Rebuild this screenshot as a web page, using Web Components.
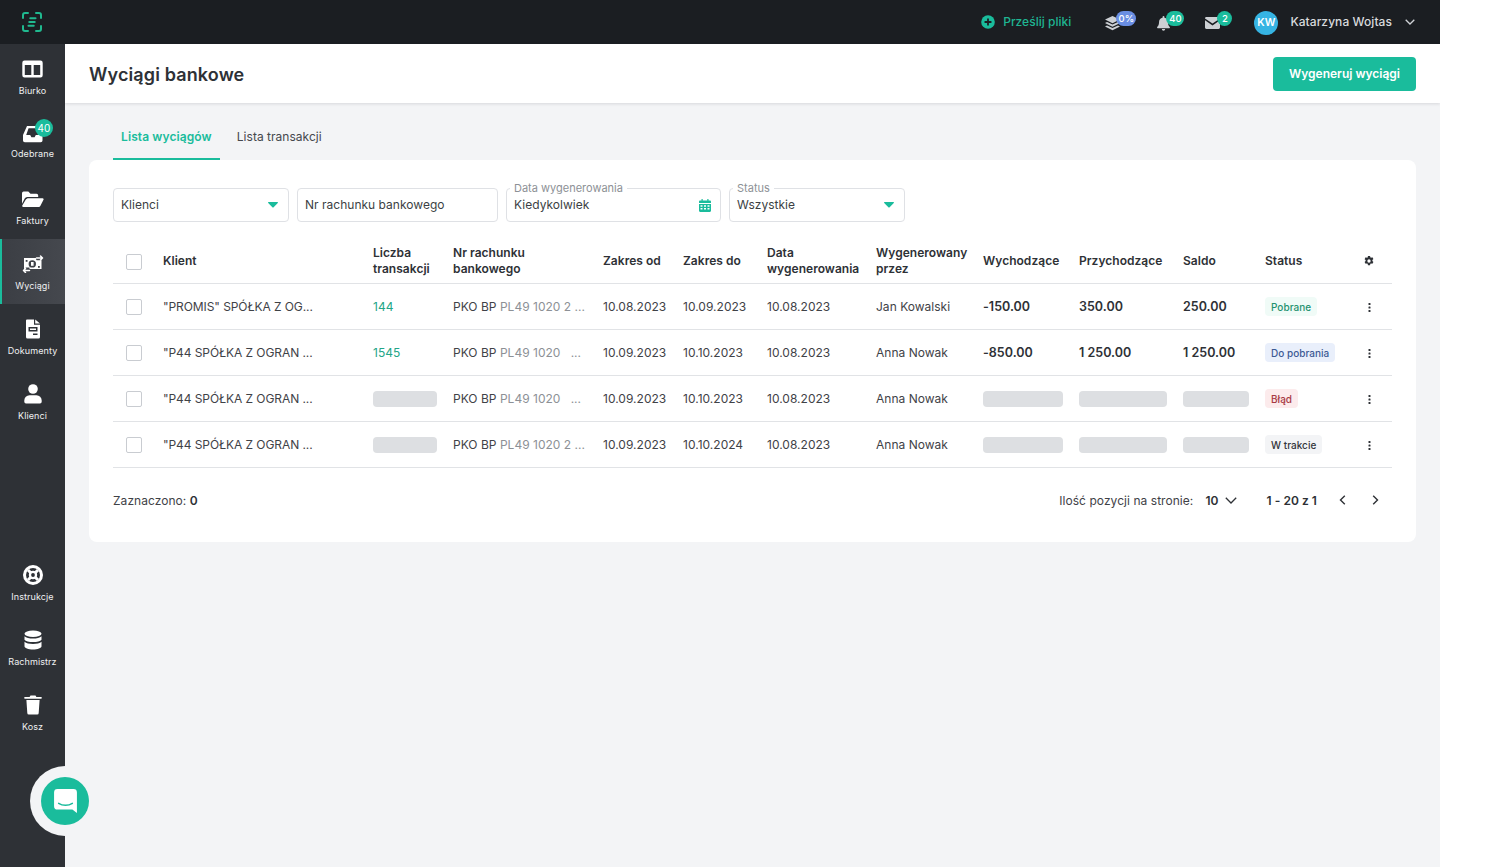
<!DOCTYPE html>
<html lang="pl"><head><meta charset="utf-8"><title>Wyciągi bankowe</title>
<style>
html,body{margin:0;padding:0;background:#fff;height:100%;overflow:hidden}
body{font-family:Inter,"Liberation Sans",sans-serif;color:#2e3136}
</style></head><body>
<app-shell>
  <app-topbar slot="top"></app-topbar>
  <app-sidebar slot="side">
    <nav-item label="Biurko" icon="desk"></nav-item>
    <nav-item label="Odebrane" icon="inbox" badge="40" tight></nav-item>
    <nav-item label="Faktury" icon="folder"></nav-item>
    <nav-item label="Wyciągi" icon="money" active></nav-item>
    <nav-item label="Dokumenty" icon="doc"></nav-item>
    <nav-item label="Klienci" icon="user"></nav-item>
    <nav-item slot="bottom" label="Instrukcje" icon="help"></nav-item>
    <nav-item slot="bottom" label="Rachmistrz" icon="db"></nav-item>
    <nav-item slot="bottom" label="Kosz" icon="trash"></nav-item>
  </app-sidebar>
  <page-header title="Wyciągi bankowe" action="Wygeneruj wyciągi"></page-header>
  <tab-bar><tab-item active>Lista wyciągów</tab-item><tab-item>Lista transakcji</tab-item></tab-bar>
  <content-card>
    <filter-bar>
      <filter-field w="176" value="Klienci" kind="select"></filter-field>
      <filter-field w="201" value="Nr rachunku bankowego"></filter-field>
      <filter-field w="215" value="Kiedykolwiek" legend="Data wygenerowania" kind="date"></filter-field>
      <filter-field w="176" value="Wszystkie" legend="Status" kind="select"></filter-field>
    </filter-bar>
    <table-head></table-head>
    <statement-row client='"PROMIS" SPÓŁKA Z OG...' count="144" acct="PL49 1020 2 ..." from="10.08.2023" to="10.09.2023" gen="10.08.2023" by="Jan Kowalski" out="-150.00" in="350.00" bal="250.00" status="Pobrane" kind="ok"></statement-row>
    <statement-row client='"P44 SPÓŁKA Z OGRAN ...' count="1545" acct="PL49 1020   ..." from="10.09.2023" to="10.10.2023" gen="10.08.2023" by="Anna Nowak" out="-850.00" in="1 250.00" bal="1 250.00" status="Do pobrania" kind="info"></statement-row>
    <statement-row client='"P44 SPÓŁKA Z OGRAN ...' acct="PL49 1020   ..." from="10.09.2023" to="10.10.2023" gen="10.08.2023" by="Anna Nowak" status="Błąd" kind="err"></statement-row>
    <statement-row client='"P44 SPÓŁKA Z OGRAN ...' acct="PL49 1020 2 ..." from="10.09.2023" to="10.10.2024" gen="10.08.2023" by="Anna Nowak" status="W trakcie" kind="idle"></statement-row>
    <table-footer></table-footer>
  </content-card>
  <chat-launcher slot="over"></chat-launcher>
</app-shell>
<script>
const def=(name,css,html,init)=>customElements.define(name,class extends HTMLElement{
  constructor(){super();this.attachShadow({mode:'open'})}
  connectedCallback(){
    const a=n=>this.getAttribute(n);
    this.shadowRoot.innerHTML=`<style>${css}</style>${typeof html==='function'?html(a,this):html}`;
    if(init)init(this,a);
  }
});
const G='#1abc9c';
const icons={
desk:`<svg width="21" height="18" viewBox="0 0 21 18"><path fill="#fff" fill-rule="evenodd" d="M2.500 .5h16A2.200 2.200 0 0 1 20.700 2.700v12.600a2.200 2.200 0 0 1-2.200 2.200h-16A2.200 2.200 0 0 1 .3 15.300V2.700A2.200 2.200 0 0 1 2.500 .5ZM2.800 5v10h6.500V5ZM11.700 5v10h6.500V5Z"/></svg>`,
inbox:`<svg width="22" height="18" viewBox="0 0 22 18"><path fill="#fff" d="M5 1h12.500l3 9v5.500a1.800 1.800 0 0 1-1.800 1.800H2.800A1.800 1.800 0 0 1 1 15.500V10Zm1.600 2.300L4.200 10h4l1.200 2.300h3.200L13.800 10h4l-2.400-6.700Z"/></svg>`,
folder:`<svg width="23" height="19" viewBox="0 0 23 19"><path fill="#fff" d="M1 3.200A1.700 1.700 0 0 1 2.700 1.500h4.600l2.200 2.200h6A1.700 1.700 0 0 1 17.200 5.400V7H6.200a2.800 2.800 0 0 0-2.500 1.500L1 13.700Z"/><path fill="#fff" d="M6.200 8.300h15.400c.8 0 1.300.8.900 1.500l-3.200 6.300a1.700 1.700 0 0 1-1.500.9H2.200c-.8 0-1.300-.8-.9-1.500l3.400-5.800a1.700 1.700 0 0 1 1.500-.9Z"/></svg>`,
money:`<svg width="22" height="18" viewBox="0 0 22 18"><path fill="#fff" fill-rule="evenodd" d="M2 3h12.500v2.300h5V14H7.500v-1.600H3.700v1.600H2Zm8.300 2.200a3.700 3.700 0 1 0 0 7.400 3.700 3.700 0 0 0 0-7.400Z"/><rect x="9" y="7" width="2.600" height="3.800" fill="#fff"/><rect x="3.700" y="5" width="1.800" height="1.800" fill="#3f4248"/><rect x="16" y="11" width="1.800" height="1.800" fill="#3f4248"/><path fill="none" stroke="#3f4248" stroke-width="3.200" d="M14 3H21"/><path fill="none" stroke="#fff" stroke-width="1.500" stroke-linecap="round" stroke-linejoin="round" d="M14.500 3h6M18.500 1l2 2-2 2"/><path fill="none" stroke="#3f4248" stroke-width="3.200" d="M1 15.500H8"/><path fill="none" stroke="#fff" stroke-width="1.500" stroke-linecap="round" stroke-linejoin="round" d="M1.500 15.500h6M3.500 13.500l-2 2 2 2"/></svg>`,
doc:`<svg width="16" height="20" viewBox="0 0 16 20"><path fill="#fff" fill-rule="evenodd" d="M2 .5h7v5.200h6V18a1.500 1.500 0 0 1-1.500 1.500h-11A1.500 1.500 0 0 1 1 18V1.500A1 1 0 0 1 2 .5ZM3.500 8v4.500h9V8Zm1.500 1.500h6V11H5Zm3 5v1.600h4.500v-1.600Z"/><path fill="#fff" d="M10.200.6 15 4.600h-4.800Z"/></svg>`,
user:`<svg width="18" height="20" viewBox="0 0 18 20"><circle cx="9" cy="5" r="4.800" fill="#fff"/><path fill="#fff" d="M5.500 11.300h7A5.200 5.200 0 0 1 17.700 16.500v1.300A1.700 1.700 0 0 1 16 19.500H2A1.700 1.700 0 0 1 .3 17.800v-1.300A5.200 5.200 0 0 1 5.500 11.300Z"/></svg>`,
help:`<svg width="20" height="20" viewBox="0 0 20 20"><circle cx="10" cy="10" r="10" fill="#fff"/><circle cx="10" cy="10" r="5.600" fill="none" stroke="#2e3136" stroke-width="2.800"/><path stroke="#fff" stroke-width="3" d="M5 5 8 8M15 5 12 8M5 15 8 12M15 15 12 12"/><circle cx="10" cy="10" r="1.900" fill="#2e3136"/></svg>`,
db:`<svg width="18" height="20" viewBox="0 0 18 20"><ellipse cx="9" cy="3.700" rx="8.500" ry="3.200" fill="#fff"/><path fill="#fff" d="M.5 6.200C2 8 5.500 8.500 9 8.500s7-.5 8.500-2.300v3.500C16.500 11.300 13 12 9 12s-7.500-.7-8.500-2.300ZM.5 11.800C2 13.500 5.500 14 9 14s7-.5 8.500-2.200v4.500c0 1.800-3.800 3.200-8.500 3.200S.5 18.100.5 16.300Z"/></svg>`,
trash:`<svg width="18" height="20" viewBox="0 0 18 20"><path fill="#fff" d="M6.500.5h5L12.400 2H17a.7.7 0 0 1 0 1.700H1A.7.7 0 0 1 1 2h4.600ZM2.400 5h13.200l-.9 13a1.500 1.500 0 0 1-1.500 1.500H4.800A1.500 1.500 0 0 1 3.300 18Z"/></svg>`,
};

def('app-shell',`
:host{display:block;width:1440px;height:867px;position:relative;background:#f3f4f6;overflow:hidden}
.cols{display:grid;grid-template-columns:65px 1fr;grid-template-rows:44px 1fr;height:100%}
.top{grid-column:1/3}
main{min-width:0}
`,`<div class="cols"><div class="top"><slot name="top"></slot></div><slot name="side"></slot><main><slot></slot></main></div><slot name="over"></slot>`);

def('app-topbar',`
:host{display:flex;align-items:center;height:44px;background:#1b1e22;padding:0 25px 1px 0;box-sizing:border-box}
.logo{margin-left:22px;margin-top:1px;display:flex}
.grow{flex:1}
.up{display:flex;align-items:center;color:#1fb592;font:500 12px Inter,sans-serif;gap:8px;margin-right:34px;white-space:nowrap;letter-spacing:.03px}
.ic{position:relative;display:flex;height:18px;align-items:center}
.ic svg{margin-top:3px}
.b{position:absolute;top:-2px;height:15px;border-radius:8px;color:#fff;font:500 9.500px/15px Inter,sans-serif;text-align:center}
.av{width:24px;height:24px;border-radius:50%;background:#36b4e3;color:#fff;font:600 10.500px/24px Inter,sans-serif;text-align:center;margin:2px 12px 0 0}
.nm{color:#d8dadd;font:500 12px Inter,sans-serif;white-space:nowrap;margin-right:13px;letter-spacing:.06px}
`,`<span class="logo"><svg width="20" height="20" viewBox="0 0 20 20" fill="none" stroke="#20b98f" stroke-width="2" stroke-linecap="round"><path d="M6 1H3a2 2 0 0 0-2 2v3M14 1h3a2 2 0 0 1 2 2v3M6 19H3a2 2 0 0 1-2-2v-3M14 19h3a2 2 0 0 0 2-2v-3"/><path stroke-width="2.100" d="M8.300 6.200h5.200M7.300 10h5.400M6.500 13.800h5.200"/></svg></span>
<span class="grow"></span>
<span class="up"><svg width="14" height="14" viewBox="0 0 15 15"><circle cx="7.500" cy="7.500" r="7.300" fill="${G}"/><path stroke="#1b1e22" stroke-width="1.900" d="M7.500 3.800v7.400M3.800 7.500h7.400"/></svg>Prześlij pliki</span>
<span class="ic" style="margin-right:21px;width:31px"><svg width="15" height="15" viewBox="0 0 15 15"><path fill="#cdd0d4" d="M7.500 0 15 3.600 7.500 7.200 0 3.600ZM2 6l5.500 2.600L13 6l2 1.100-7.500 3.600L0 7.100ZM2 9.500l5.500 2.600L13 9.500l2 1.100L7.500 14.200 0 10.600Z"/></svg><span class="b" style="left:11px;width:20px;background:#6a8ee3">0%</span></span>
<span class="ic" style="margin-right:21px;width:27px"><svg width="13" height="15" viewBox="0 0 14 16"><path fill="#cdd0d4" d="M7 0a1 1 0 0 1 1 1v.8A4.700 4.700 0 0 1 11.800 6.500c0 3.800 1.700 5 2 5.400.3.500 0 1.100-.6 1.100H.8c-.6 0-.9-.6-.6-1.100.3-.4 2-1.600 2-5.400A4.700 4.700 0 0 1 6 1.800V1a1 1 0 0 1 1-1ZM5.200 14h3.600a1.800 1.800 0 0 1-3.600 0Z"/></svg><span class="b" style="left:9px;width:18px;background:${G}">40</span></span>
<span class="ic" style="margin-right:22px;width:27px"><svg width="15" height="12" viewBox="0 0 15 12"><path fill="#cdd0d4" d="M1.400 0h12.200c.8 0 1.400.6 1.400 1.400L7.500 6.600 0 1.400C0 .6.600 0 1.400 0ZM0 3.200l7.500 5.200L15 3.200v7.400c0 .8-.6 1.400-1.400 1.400H1.400C.6 12 0 11.400 0 10.600Z"/></svg><span class="b" style="left:12px;width:15px;background:${G}">2</span></span>
<span class="av">KW</span><span class="nm">Katarzyna Wojtas</span>
<svg width="10" height="6" viewBox="0 0 10 6" fill="none" stroke="#cfd2d6" stroke-width="1.300"><path d="M.7.7 5 5 9.300.7"/></svg>`);

def('app-sidebar',`
:host{display:flex;flex-direction:column;background:#2e3136;padding-bottom:122px;box-sizing:border-box;height:823px}
.grow{flex:1}
`,`<slot></slot><span class="grow"></span><slot name="bottom"></slot>`);

def('nav-item',`
:host{display:flex;flex-direction:column;align-items:center;height:65px;box-sizing:border-box;position:relative;color:#eef0f1;font:400 9px/12px Inter,sans-serif;letter-spacing:.1px;white-space:nowrap}
:host([active]){background:linear-gradient(90deg,#3b3e44,#45484e);box-shadow:inset 2px 0 0 ${G}}
.i{height:20px;margin-top:15px;display:flex;align-items:center;justify-content:center}
.l{margin-top:6px}
:host([tight]) .l{margin-top:4px}
.bd{position:absolute;left:35px;top:10px;width:18px;height:18px;border-radius:50%;background:${G};color:#fff;font:400 10px/18px Inter,sans-serif;text-align:center;letter-spacing:0}
`,(a)=>`<span class="i">${icons[a('icon')]}</span><span class="l">${a('label')}</span>${a('badge')?`<span class="bd">${a('badge')}</span>`:''}`);

def('page-header',`
:host{display:flex;align-items:center;justify-content:space-between;height:59px;background:#fff;padding:0 24px;box-shadow:0 1px 3px rgba(40,45,55,.14);position:relative}
h1{margin:2px 0 0;font:600 18px Inter,sans-serif;color:#2e3136;letter-spacing:.13px}
button{height:34px;width:143px;border:0;border-radius:4px;background:${G};color:#fff;font:600 12px Inter,sans-serif;padding:0}
`,a=>`<h1>${a('title')}</h1><button>${a('action')}</button>`);

def('tab-bar',`:host{display:flex;padding:0 48px;height:57px;align-items:stretch}`,`<slot></slot>`);
def('tab-item',`
:host{display:flex;align-items:center;padding:11px 8px 0;margin-right:9px;font:400 12px Inter,sans-serif;color:#45484d;box-sizing:border-box;border-bottom:2px solid transparent;white-space:nowrap;letter-spacing:.03px}
:host([active]){font-weight:600;color:${G};border-color:${G};letter-spacing:.1px}
`,`<slot></slot>`);

def('content-card',`
:host{display:block;margin:0 24px;background:#fff;border-radius:8px;padding:28px 24px 0;height:382px;box-sizing:border-box;
--cols:50px 210px 80px 150px 80px 84px 109px 107px 96px 104px 82px 94px 33px}
`,`<slot></slot>`);

def('filter-bar',`:host{display:flex;gap:8px;margin-bottom:18px}`,`<slot></slot>`);
def('filter-field',`
:host{display:flex;align-items:center;justify-content:space-between;box-sizing:border-box;height:34px;border:1px solid #dfe1e5;border-radius:4px;padding:0 7px 2px;position:relative;font:400 12px Inter,sans-serif;color:#3c3f44;white-space:nowrap;letter-spacing:.02px}
.lg{position:absolute;left:3px;top:-7px;background:#fff;padding:0 4px;font:400 11px/12px Inter,sans-serif;color:#8d9196;letter-spacing:0}
svg{margin-top:2px}
`,(a,t)=>{t.style.width=a('w')+'px';
 const k=a('kind');
 const ic=k==='select'?`<svg width="10" height="6" viewBox="0 0 10 6" style="margin-right:3px"><path fill="${G}" d="M.6 0h8.800c.5 0 .8.600.4 1L5.400 5.400a.6.6 0 0 1-.8 0L.2 1C-.2.600.1 0 .6 0Z"/></svg>`:k==='date'?`<svg width="12" height="13" viewBox="0 0 12 13" style="margin-right:2px"><path fill="${G}" fill-rule="evenodd" d="M2.500 0h1.200v1.500h4.600V0h1.200v1.500h1.300c.7 0 1.200.5 1.200 1.200V4H0V2.700c0-.7.500-1.200 1.200-1.200h1.300ZM0 5h12v6.800c0 .7-.5 1.200-1.200 1.200H1.200C.5 13 0 12.500 0 11.800Zm1.500 1.300v1.400h2V6.300Zm3.500 0v1.400h2V6.300Zm3.500 0v1.400h2V6.300ZM1.500 9v1.500h2V9ZM5 9v1.500h2V9Zm3.500 0v1.500h2V9Z"/></svg>`:'';
 return `${a('legend')?`<span class="lg">${a('legend')}</span>`:''}<span>${a('value')}</span>${ic}`});

const chk=`.cb{display:block;width:14px;height:14px;border:1px solid #c9ccd1;border-radius:2px;margin-left:13px;background:#fff}`;
def('table-head',`
:host{display:grid;grid-template-columns:var(--cols);align-items:center;height:44px;box-sizing:border-box;padding-bottom:2px;border-bottom:1px solid #e1e3e6;font:600 12px/16px Inter,sans-serif;color:#2e3136;letter-spacing:.03px}
${chk}
.cb{margin-top:2px}
.g{display:flex;justify-content:flex-end;padding-right:18px;margin-top:1px}
`,`<span><span class="cb"></span></span><span>Klient</span><span>Liczba<br>transakcji</span><span>Nr rachunku<br>bankowego</span><span>Zakres od</span><span>Zakres do</span><span>Data<br>wygenerowania</span><span>Wygenerowany<br>przez</span><span>Wychodzące</span><span>Przychodzące</span><span>Saldo</span><span>Status</span><span class="g"><svg width="10" height="10" viewBox="0 0 24 24"><path fill="#2e3136" fill-rule="evenodd" d="M14.500 0h-5l-.7 3.300-1.700 1L3.900 3.200 1.400 7.500 3.900 9.800v2l0 .4-2.500 2.300 2.500 4.300 3.200-1.100 1.700 1 .7 3.300h5l.7-3.300 1.700-1 3.200 1.100 2.500-4.300-2.500-2.300v-2.400l2.500-2.300-2.500-4.300-3.200 1.100-1.700-1ZM12 8a4 4 0 1 1 0 8 4 4 0 0 1 0-8Z"/></svg></span>`);

const pills={ok:['#f0fbf7','#1f9270'],info:['#e9effb','#3d5a94'],err:['#fcebec','#a83a45'],idle:['#f3f4f6','#33363b']};
def('statement-row',`
:host{display:grid;grid-template-columns:var(--cols);align-items:center;height:46px;box-sizing:border-box;border-bottom:1px solid #e1e3e6;font:400 12px Inter,sans-serif;color:#3f4247;white-space:pre;letter-spacing:.02px}
${chk}
.cl{letter-spacing:-.08px}
.lnk{color:#22a587}
.mut{color:#8d9196}
b{font-weight:600;font-size:12.500px;color:#2e3136}
.sk{display:block;height:16px;border-radius:4px;background:#dddfe2}
.pw{display:flex;align-items:center}
.p{display:block;height:19px;border-radius:4px;padding:0 6px;font:500 10px/20px Inter,sans-serif}
.d{display:flex;justify-content:flex-end;padding-right:21px;margin-top:1px}
`,a=>{const sk=w=>`<span class="sk" style="width:${w}px"></span>`;const [bg,fg]=pills[a('kind')];
 return `<span><span class="cb"></span></span><span class="cl">${a('client')}</span><span>${a('count')?`<span class="lnk">${a('count')}</span>`:sk(64)}</span><span>PKO BP <span class="mut">${a('acct')}</span></span><span>${a('from')}</span><span>${a('to')}</span><span>${a('gen')}</span><span>${a('by')}</span><span>${a('out')?`<b>${a('out')}</b>`:sk(80)}</span><span>${a('in')?`<b>${a('in')}</b>`:sk(88)}</span><span>${a('bal')?`<b>${a('bal')}</b>`:sk(66)}</span><span class="pw"><span class="p" style="background:${bg};color:${fg}">${a('status')}</span></span><span class="d"><svg width="3" height="9" viewBox="0 0 3 9"><g fill="#2e3136"><rect x=".5" width="2" height="2" rx=".6"/><rect x=".5" y="3.500" width="2" height="2" rx=".6"/><rect x=".5" y="7" width="2" height="2" rx=".6"/></g></svg></span>`});

def('table-footer',`
:host{display:flex;align-items:center;height:66px;padding-bottom:2px;box-sizing:border-box;font:400 12px Inter,sans-serif;color:#3f4247;white-space:nowrap;letter-spacing:.05px}
b{font-weight:600;color:#2e3136}
.g{flex:1}
svg{display:block}
.pp{margin-left:12px;display:flex;align-items:center;gap:7px}
.rg{margin-left:29px}
`,`<span>Zaznaczono: <b>0</b></span><span class="g"></span><span>Ilość pozycji na stronie:</span><span class="pp"><b>10</b><svg width="12" height="7" viewBox="0 0 12 7" fill="none" stroke="#2e3136" stroke-width="1.300"><path d="M.8.8 6 6l5.200-5.200"/></svg></span><b class="rg">1 - 20 z 1</b><svg style="margin-left:22px" width="7" height="10" viewBox="0 0 7 10" fill="none" stroke="#2e3136" stroke-width="1.400"><path d="M5.800.8 1.500 5l4.300 4.200"/></svg><svg style="margin:0 13px 0 26px" width="7" height="10" viewBox="0 0 7 10" fill="none" stroke="#2e3136" stroke-width="1.400"><path d="M1.200.8 5.500 5 1.200 9.200"/></svg>`);

def('chat-launcher',`
:host{position:absolute;left:30px;top:766px;width:70px;height:70px;border-radius:50%;background:#f3f4f6;display:flex;align-items:center;justify-content:center}
.c{width:48px;height:48px;border-radius:50%;background:${G};display:flex;align-items:center;justify-content:center}
`,`<span class="c"><svg width="23" height="24" viewBox="0 0 20 21"><path fill="#fff" d="M3 0h14a3 3 0 0 1 3 3v18l-4-3H3a3 3 0 0 1-3-3V3a3 3 0 0 1 3-3Z"/><path fill="none" stroke="${G}" stroke-width="1.300" stroke-linecap="round" d="M4 12.500c3.500 2.300 8.500 2.300 12 0"/></svg></span>`);
</script>
</body></html>
